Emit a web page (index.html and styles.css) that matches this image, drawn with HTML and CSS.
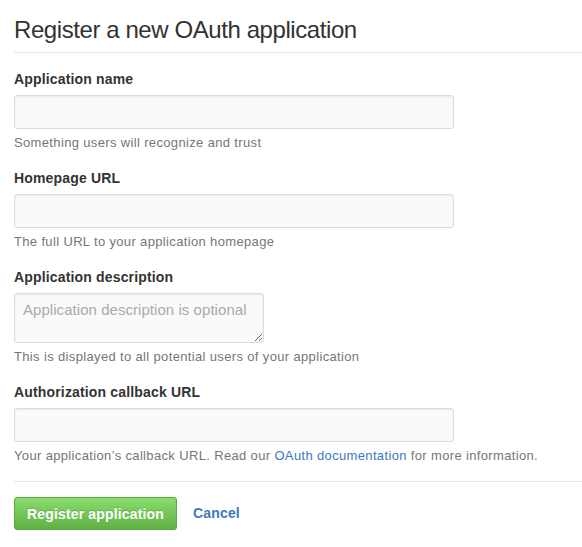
FILE: index.html
```html
<!DOCTYPE html>
<html>
<head>
<meta charset="utf-8">
<link rel="stylesheet" href="styles.css">
</head>
<body>
<div class="page">
  <div class="subhead">
    <h2 class="subhead-heading">Register a new OAuth application</h2>
  </div>
  <form class="form">
    <div class="form-group">
      <label class="form-label">Application name</label>
      <input class="form-control" type="text">
      <p class="note">Something users will recognize and trust</p>
    </div>
    <div class="form-group">
      <label class="form-label">Homepage URL</label>
      <input class="form-control" type="text">
      <p class="note">The full URL to your application homepage</p>
    </div>
    <div class="form-group">
      <label class="form-label">Application description</label>
      <textarea class="form-control textarea" placeholder="Application description is optional"></textarea>
      <p class="note">This is displayed to all potential users of your application</p>
    </div>
    <div class="form-group">
      <label class="form-label">Authorization callback URL</label>
      <input class="form-control" type="text">
      <p class="note">Your application’s callback URL. Read our <a class="link" href="#">OAuth documentation</a> for more information.</p>
    </div>
    <div class="actions">
      <button class="btn-primary" type="button">Register application</button>
      <a class="btn-link" href="#">Cancel</a>
    </div>
  </form>
</div>
</body>
</html>
```

FILE: styles.css
```css
html, body {
  margin: 0;
  padding: 0;
  background: #fff;
}
body {
  font-family: "Liberation Sans", Arial, sans-serif;
  color: #333;
  font-size: 14px;
  line-height: 1.4;
}
.page {
  padding-left: 14px;
}
.subhead {
  padding-top: 15px;
  padding-bottom: 7px;
  border-bottom: 1px solid #e5e5e5;
}
.subhead-heading {
  margin: 0;
  font-size: 24px;
  font-weight: normal;
  line-height: 30px;
  letter-spacing: -0.42px;
  color: #333;
}
.form {
  padding-top: 16px;
}
.form-group {
  display: flex;
  flex-direction: column;
  align-items: flex-start;
  margin-bottom: 16px;
}
.form-label {
  display: block;
  font-weight: bold;
  font-size: 14px;
  line-height: 20px;
  letter-spacing: 0.16px;
  margin-bottom: 6px;
}
.form-control {
  box-sizing: border-box;
  width: 440px;
  height: 34px;
  margin: 0;
  padding: 6px 8px;
  font-family: inherit;
  font-size: 15px;
  letter-spacing: 0.05px;
  color: #333;
  background: #fafafa;
  border: 1px solid #ddd;
  border-radius: 3px;
  box-shadow: inset 0 1px 2px rgba(0,0,0,0.075);
  outline: none;
}
.textarea {
  width: 250px;
  height: 50px;
  padding: 6px 8px;
  line-height: 20px;
}
.textarea::placeholder {
  color: #aaa;
}
.note {
  margin: 5px 0 0;
  font-size: 13px;
  line-height: 18px;
  letter-spacing: 0.35px;
  color: #767676;
}
.link {
  color: #4078c0;
  text-decoration: none;
}
.actions {
  display: flex;
  align-items: center;
  gap: 16px;
  border-top: 1px solid #e5e5e5;
  padding-top: 15px;
}
.btn-primary {
  box-sizing: border-box;
  height: 33px;
  padding: 6px 12px;
  font-family: inherit;
  font-size: 14px;
  font-weight: bold;
  letter-spacing: 0.16px;
  color: #fff;
  text-shadow: 0 -1px 0 rgba(0,0,0,0.15);
  background-color: #60b044;
  background-image: linear-gradient(#8add6d, #60b044);
  border: 1px solid #5ca941;
  border-radius: 3px;
  cursor: pointer;
}
.btn-link {
  font-size: 14px;
  font-weight: bold;
  letter-spacing: 0.16px;
  color: #4078c0;
  text-decoration: none;
}
```
